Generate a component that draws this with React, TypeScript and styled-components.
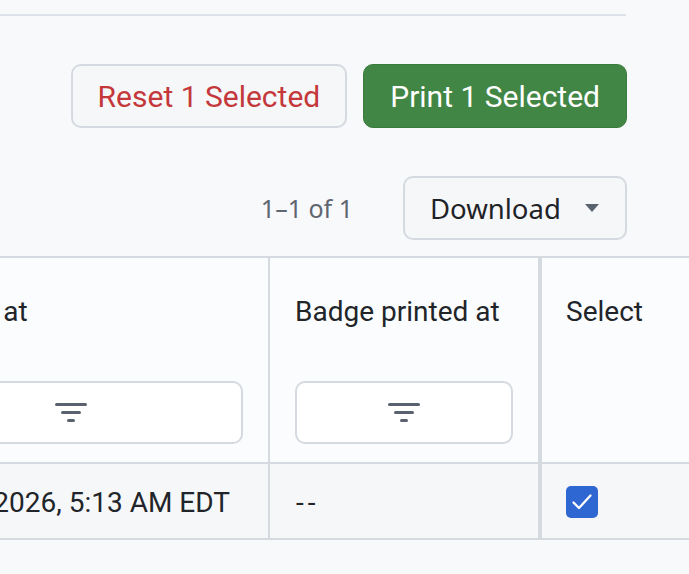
import styled, { createGlobalStyle } from "styled-components";

const GlobalStyle = createGlobalStyle`
  body {
    margin: 0;
    background: #f8f9fb;
    font-family: Roboto, "Liberation Sans", sans-serif;
    color: #212529;
  }
`;

const Page = styled.div`
  width: 689px;
  height: 574px;
  overflow: hidden;
  padding-top: 14px;
  box-sizing: border-box;
`;

const TopRule = styled.div`
  height: 2px;
  margin-right: 63px;
  background: #dde2e8;
`;

const ActionBar = styled.div`
  display: flex;
  justify-content: flex-end;
  gap: 16px;
  margin-top: 48px;
  padding-right: 62px;
`;

const ActionButton = styled.button<{ $primary?: boolean }>`
  height: 64px;
  padding: 0 ${(p) => (p.$primary ? "26px" : "25px")};
  border-radius: 10px;
  font-family: Roboto, "Liberation Sans", sans-serif;
  font-size: 30px;
  box-sizing: border-box;
  border: ${(p) => (p.$primary ? "1px solid #3b7b3e" : "2px solid #d5dae0")};
  background: ${(p) => (p.$primary ? "#428645" : "#f6f7f9")};
  color: ${(p) => (p.$primary ? "#ffffff" : "#c4383b")};
`;

const Toolbar = styled.div`
  display: flex;
  justify-content: flex-end;
  align-items: center;
  gap: 50px;
  margin-top: 48px;
  padding-right: 62px;
`;

const PageInfo = styled.span`
  font-family: "Noto Sans", sans-serif;
  font-size: 25px;
  color: #5f6670;
`;

const DownloadButton = styled.button`
  width: 224px;
  height: 64px;
  box-sizing: border-box;
  display: flex;
  align-items: center;
  justify-content: space-between;
  padding: 0 26px 0 25px;
  border: 2px solid #d5dae0;
  border-radius: 10px;
  background: #f6f7f9;
  font-family: "Noto Sans", sans-serif;
  font-size: 27.5px;
  color: #1f2328;
`;

const Caret = styled.span`
  width: 0;
  height: 0;
  border-left: 7px solid transparent;
  border-right: 7px solid transparent;
  border-top: 8px solid #5a6270;
`;

const Table = styled.div`
  margin-top: 16px;
  margin-left: -126px;
  display: grid;
  grid-template-columns: 396px 270px 220px;
  border-top: 2px solid #d5dae0;
`;

const HeadCell = styled.div<{ $sticky?: boolean }>`
  height: 206px;
  box-sizing: border-box;
  display: flex;
  flex-direction: column;
  padding: 38px ${(p) => (p.$sticky ? "24px" : "25px")} 18px;
  background: #fbfcfd;
  font-size: 28px;
  line-height: 32px;
  border-bottom: 2px solid #d5dae0;
  border-right: ${(p) => (p.$sticky ? "none" : "2px solid #d5dae0")};
  border-left: ${(p) => (p.$sticky ? "2px solid #d5dae0" : "none")};
  white-space: nowrap;
`;

const FilterBox = styled.div`
  margin-top: auto;
  height: 63px;
  box-sizing: border-box;
  border: 2px solid #d5dae0;
  border-radius: 10px;
  background: #ffffff;
  display: flex;
  align-items: center;
  justify-content: center;
`;

const BodyCell = styled.div<{ $sticky?: boolean }>`
  height: 76px;
  box-sizing: border-box;
  display: flex;
  align-items: center;
  padding: 2px ${(p) => (p.$sticky ? "24px" : "25px")} 0;
  background: #f6f7f9;
  font-size: 28px;
  white-space: nowrap;
  border-bottom: 2px solid #d5dae0;
  border-right: ${(p) => (p.$sticky ? "none" : "2px solid #d5dae0")};
  border-left: ${(p) => (p.$sticky ? "2px solid #d5dae0" : "none")};
`;

const Empty = styled.span`
  letter-spacing: 4px;
  margin-left: 1px;
`;

const Checkbox = styled.span`
  width: 32px;
  height: 32px;
  border-radius: 5px;
  background: #2f67d2;
  display: flex;
  align-items: center;
  justify-content: center;
`;

function FilterIcon() {
  return (
    <svg width="32" height="20" viewBox="0 0 32 20">
      <g fill="#5a6270">
        <rect x="0" y="0" width="32" height="3" rx="1.5" />
        <rect x="6" y="8" width="20" height="3" rx="1.5" />
        <rect x="12" y="16" width="8" height="3" rx="1.5" />
      </g>
    </svg>
  );
}

function App() {
  return (
    <Page>
      <GlobalStyle />
      <TopRule />
      <ActionBar>
        <ActionButton>Reset 1 Selected</ActionButton>
        <ActionButton $primary>Print 1 Selected</ActionButton>
      </ActionBar>
      <Toolbar>
        <PageInfo>1–1 of 1</PageInfo>
        <DownloadButton>
          Download
          <Caret />
        </DownloadButton>
      </Toolbar>
      <Table>
        <HeadCell>
          Created at
          <FilterBox>
            <FilterIcon />
          </FilterBox>
        </HeadCell>
        <HeadCell>
          Badge printed at
          <FilterBox>
            <FilterIcon />
          </FilterBox>
        </HeadCell>
        <HeadCell $sticky>Select</HeadCell>
        <BodyCell>Apr 21, 2026, 5:13 AM EDT</BodyCell>
        <BodyCell>
          <Empty>--</Empty>
        </BodyCell>
        <BodyCell $sticky>
          <Checkbox>
            <svg width="22" height="18" viewBox="0 0 22 18">
              <path
                d="M2.5 9.5 L8 15 L19.5 2.5"
                fill="none"
                stroke="#ffffff"
                strokeWidth="2.3"
                strokeLinecap="round"
                strokeLinejoin="round"
              />
            </svg>
          </Checkbox>
        </BodyCell>
      </Table>
    </Page>
  );
}

export default App;
